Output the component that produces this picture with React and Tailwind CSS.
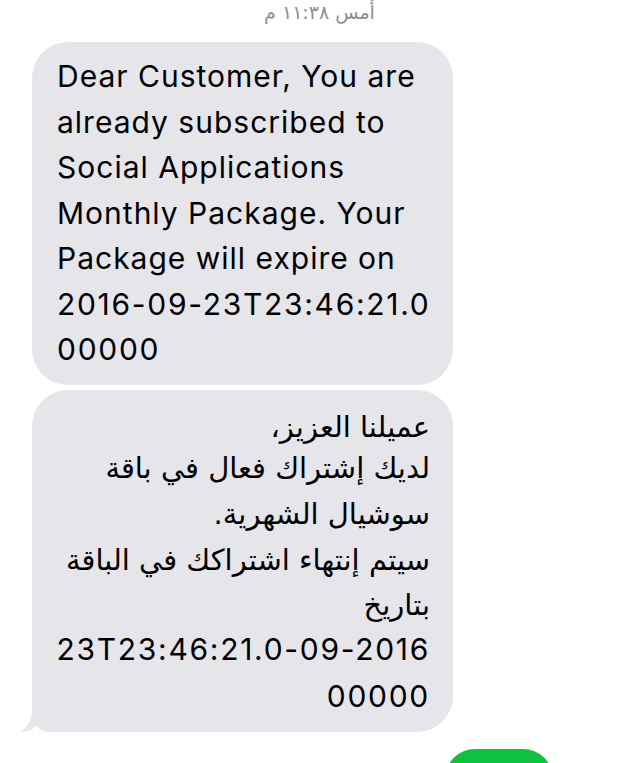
import React from 'react';

const englishLines = [
  { text: 'Dear Customer, You are', num: false },
  { text: 'already subscribed to', num: false },
  { text: 'Social Applications', num: false },
  { text: 'Monthly Package. Your', num: false },
  { text: 'Package will expire on', num: false },
  { text: '2016-09-23T23:46:21.0', num: true },
  { text: '00000', num: true },
];

const arabicLines = [
  { text: 'عميلنا العزيز،', ltr: false, h: 'h-[39px] leading-[39px]' },
  { text: 'لديك إشتراك فعال في باقة', ltr: false, h: 'h-[43.5px] leading-[43.5px]' },
  { text: 'سوشيال الشهرية.', ltr: false, h: 'h-[47.5px] leading-[47.5px]' },
  { text: 'سيتم إنتهاء اشتراكك في الباقة', ltr: false, h: 'h-[45px] leading-[45px]' },
  { text: 'بتاريخ', ltr: false, h: 'h-[44px] leading-[44px]' },
  { text: '23T23:46:21.0-09-2016', ltr: true, h: 'h-[45.5px] leading-[45.5px]' },
  { text: '00000', ltr: true, h: 'h-[46px] leading-[46px]' },
];

const App = () => {
  return (
    <div
      className="h-[763px] w-[639px] overflow-hidden bg-white text-black"
      style={{ fontFamily: "Inter, 'DejaVu Sans', sans-serif" }}
    >
      {/* Timestamp */}
      <div
        dir="rtl"
        className="text-center text-[19px] leading-[24px] text-[#8e8e93]"
        style={{ fontFamily: "'DejaVu Sans', sans-serif" }}
      >
        أمس ١١:٣٨ م
      </div>

      <div className="mt-[18px] flex flex-col gap-[5px] pl-[32px]">
        {/* English bubble */}
        <div className="w-[421px] rounded-[36px] bg-[#e5e5ea] px-[25px] py-[12px] text-[30px] leading-[45.5px]">
          {englishLines.map((line, i) => (
            <div
              key={i}
              className={line.num ? 'whitespace-nowrap tracking-[1.7px]' : 'whitespace-nowrap tracking-[1px]'}
            >
              {line.text}
            </div>
          ))}
        </div>

        {/* Arabic bubble */}
        <div className="relative w-[421px] rounded-[36px] rounded-bl-[18px] bg-[#e5e5ea] pl-[23px] pr-[23px] pt-[18.5px] pb-[13px]">
          {arabicLines.map((line, i) => (
            <div
              key={i}
              dir={line.ltr ? 'ltr' : 'rtl'}
              className={
                line.ltr
                  ? `whitespace-nowrap text-right text-[30px] tracking-[1.7px] ${line.h}`
                  : `whitespace-nowrap text-right text-[29px] ${line.h}`
              }
              style={line.ltr ? undefined : { fontFamily: "'DejaVu Sans', sans-serif" }}
            >
              {line.text}
            </div>
          ))}
          {/* tail */}
          <svg
            className="absolute bottom-0 left-[-12px]"
            width="40"
            height="30"
            viewBox="0 0 40 30"
          >
            <path
              d="M12 0 L30 0 L30 30 L40 30 C 28 30 22 26 18 22 C 14 27 8 30 0 30 C 8 26 12 18 12 6 Z"
              fill="#e5e5ea"
            />
          </svg>
        </div>
      </div>

      {/* Outgoing green bubble (cut off) */}
      <div className="mt-[17px] flex justify-end pr-[86px]">
        <div className="h-[60px] w-[108px] rounded-[30px] bg-[#10c13f]" />
      </div>
    </div>
  );
};

export default App;
